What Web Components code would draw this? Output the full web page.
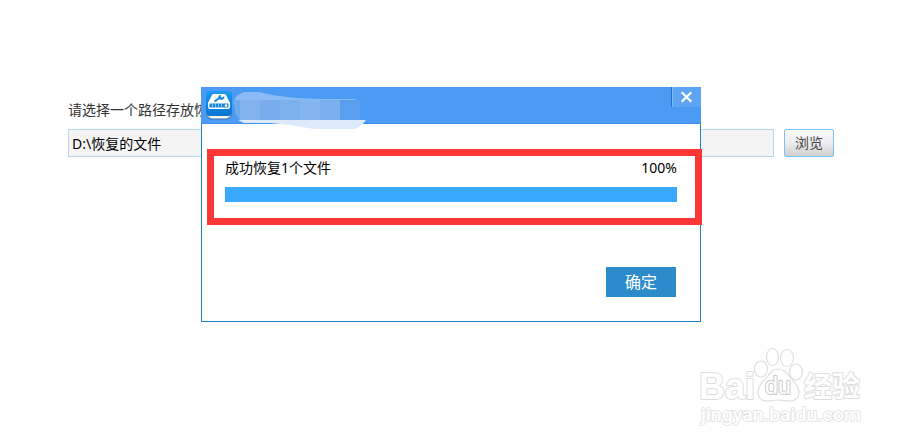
<!DOCTYPE html>
<html lang="zh-CN">
<head>
<meta charset="utf-8">
<title>恢复文件</title>
<style>
  body {
    margin: 0;
    width: 912px;
    height: 446px;
    overflow: hidden;
    background: #fff;
    font: 14px/20px "Noto Sans", "Noto Sans CJK SC", sans-serif;
    color: #000;
  }
</style>
</head>
<body>
<recovery-page>
  <path-picker label="请选择一个路径存放恢" button="浏览">D:\恢复的文件</path-picker>
  <progress-dialog slot="dialog">
    <app-icon slot="icon"></app-icon>
    <progress-row value="100">成功恢复1个文件</progress-row>
    <primary-button slot="actions">确定</primary-button>
  </progress-dialog>
  <site-watermark slot="mark"></site-watermark>
</recovery-page>

<script>
class BaseElement extends HTMLElement {
  constructor() {
    super();
    this.root = this.attachShadow({mode: 'open'});
  }

  connectedCallback() {
    this.root.innerHTML = `<style>${this.styles()}</style>${this.template()}`;
  }

  styles() { return ''; }
  template() { return '<slot></slot>'; }
}

class RecoveryPage extends BaseElement {
  styles() {
    return `
      :host { display: block; position: relative; box-sizing: border-box;
              width: 912px; height: 446px; padding: 100px 78px 0 68px; }
      ::slotted([slot=dialog]) { position: absolute; left: 201px; top: 87px; }
      ::slotted([slot=mark]) { position: absolute; left: 690px; top: 340px; }
    `;
  }

  template() {
    return `<slot></slot><slot name="dialog"></slot><slot name="mark"></slot>`;
  }
}

class PathPicker extends BaseElement {
  styles() {
    return `
      :host { display: flex; flex-direction: column; gap: 9px; }
      .label { color: #333; white-space: nowrap; }
      .row { display: flex; gap: 10px; }
      .field { flex: 1; box-sizing: border-box; height: 28px; padding: 4px 3px 0;
               line-height: 20px; background: #f4f4f4; border: 1px solid #b5d8e8; }
      button { box-sizing: border-box; width: 50px; height: 28px; padding: 0;
               font: inherit; line-height: 26px; color: #444;
               border: 1px solid #79c3f7; border-radius: 2px;
               background: linear-gradient(#fbfbfb, #ececec 50%, #d0d0d0); }
    `;
  }

  template() {
    return `
      <div class="label">${this.getAttribute('label')}</div>
      <div class="row">
        <div class="field"><slot></slot></div>
        <button>${this.getAttribute('button')}</button>
      </div>
    `;
  }
}

class AppIcon extends BaseElement {
  styles() {
    return `:host { display: block; width: 28px; height: 30px; } svg { display: block; }`;
  }

  template() {
    return `
      <svg width="28" height="30" viewBox="0 0 28 30">
        <defs>
          <linearGradient id="face" x1="0" y1="0" x2="0" y2="1">
            <stop offset="0" stop-color="#1d9af2"/>
            <stop offset=".6" stop-color="#0a84e0"/>
            <stop offset="1" stop-color="#0a76d0"/>
          </linearGradient>
          <linearGradient id="rim" x1="0" y1="0" x2="1" y2="0">
            <stop offset="0" stop-color="#9a948e"/>
            <stop offset=".2" stop-color="#f4f2ef"/>
            <stop offset=".8" stop-color="#f4f2ef"/>
            <stop offset="1" stop-color="#958f89"/>
          </linearGradient>
        </defs>
        <rect x="1" y="6" width="26" height="22.500" rx="6" fill="#3570b8"/>
        <rect x="1" y="5" width="26" height="22.500" rx="6" fill="url(#rim)"/>
        <rect x="1" y="0" width="26" height="25" rx="4" fill="url(#face)"/>
        <path d="M8.500 3h11q1 0 1.500 1l4 8H3l4-8q.5-1 1.500-1z" fill="#fff"/>
        <path d="M9.500 10.500l5.500-4" stroke="#1487e0" stroke-width="2"/>
        <path d="M13.500 4.500l2.500-.5-.3 2 1.600.5 2-1.500v2.600l-2.500 1.400-3.300-1z" fill="#1487e0"/>
        <path d="M3 11h22v5q0 2-2 2H5q-2 0-2-2z" fill="#fff"/>
        <rect x="4.500" y="12.500" width="19" height="4" rx=".5" fill="#1683dc"/>
        <path d="M7.500 12.500v4m3-4v4m3-4v4m3-4v4" stroke="#a9d5f8" stroke-width=".8"/>
        <circle cx="21" cy="14.500" r="1.300" fill="#fff"/>
      </svg>
    `;
  }
}

class ProgressDialog extends BaseElement {
  styles() {
    return `
      :host { display: flex; flex-direction: column; box-sizing: border-box;
              width: 500px; height: 235px; background: #fff;
              border: 1px solid #2380c0; border-top: 0; }
      header { display: flex; justify-content: space-between; box-sizing: border-box;
               height: 37px; margin: 0 -1px; padding-left: 4px;
               background: #4b9af4; border-bottom: 1px solid #3f91ed; }
      .icon { padding-top: 4px; }
      .smudge { position: absolute; left: 32px; top: 3px; }
      .close { display: flex; align-items: center; justify-content: center;
               box-sizing: border-box; width: 30px; height: 20px;
               background: #5da4f5; border-left: 1px solid #2c70bc;
               box-shadow: inset 1px 0 #81b9f8; }
      .body { padding: 34px 23px 0; }
      footer { display: flex; justify-content: flex-end; padding: 65px 24px 0 0; }
      /* marco rojo que resalta el progreso */
      .mark { position: absolute; left: 5px; top: 62px; box-sizing: border-box;
              width: 495px; height: 76px; border: 7px solid #fd3636; }
    `;
  }

  template() {
    return `
      <header>
        <div class="icon"><slot name="icon"></slot></div>
        <div class="close">
          <svg width="13" height="12" viewBox="0 0 13 12">
            <path d="M1.700 1.200l9.600 9.600m0-9.600l-9.600 9.600" stroke="#fff" stroke-width="2.200"/>
          </svg>
        </div>
      </header>
      <svg class="smudge" width="136" height="42" viewBox="0 0 136 42">
        <path d="M1 8l3-3 6-3h15l14 3 14 2 10 1 20 1 38 0 5 2v19H6L2 24l-1-6-1-5z" fill="#8abaf5"/>
        <path d="M1 10h5v20L3 25l-2-7z" fill="#6ea9ef"/>
        <path d="M6 10h20v20H6z" fill="#82b3ef"/>
        <path d="M26 10h20v20H26z" fill="#79acec"/>
        <path d="M46 10h20v20H46z" fill="#7db1ed"/>
        <path d="M66 10h20v20H66z" fill="#83b5f0"/>
        <path d="M86 10h20v20H86z" fill="#7bafee"/>
        <path d="M106 10h19l1 2v18h-20z" fill="#5a9eef"/>
        <path d="M4 30h128l-5 6-6 3-41 0-24-4-20-2H10z" fill="#dceafb"/>
      </svg>
      <div class="body"><slot></slot></div>
      <footer><slot name="actions"></slot></footer>
      <div class="mark"></div>
    `;
  }
}

class ProgressRow extends BaseElement {
  styles() {
    return `
      :host { display: flex; flex-direction: column; gap: 9px; }
      .text { display: flex; justify-content: space-between; }
      .track { height: 15px; background: #e6e6e6; }
      .bar { height: 100%; background: #38a9fd; }
    `;
  }

  template() {
    const value = this.getAttribute('value');
    return `
      <div class="text"><span><slot></slot></span><span>${value}%</span></div>
      <div class="track"><div class="bar" style="width: ${value}%"></div></div>
    `;
  }
}

class PrimaryButton extends BaseElement {
  styles() {
    return `
      :host { display: block; }
      button { display: block; width: 70px; height: 30px; padding: 0; border: 0;
               font: inherit; font-size: 16px; line-height: 29px;
               color: #fff; background: #2d8bcb; }
    `;
  }

  template() {
    return `<button><slot></slot></button>`;
  }
}

class SiteWatermark extends BaseElement {
  styles() {
    return `
      :host { display: block; width: 180px; height: 95px; }
      svg { display: block; }
      .line { fill: #fff; stroke: #dedede; stroke-width: 1.200; }
      text { fill: #fff; stroke: #dedede; stroke-width: 2; paint-order: stroke;
             stroke-linejoin: round; }
      .logo { font: bold 37px "Liberation Sans", sans-serif; }
      .du { font: 23px "Liberation Sans", sans-serif; stroke: #cacaca; }
      .cn { font: bold 28px "Noto Sans CJK SC", sans-serif; }
      .url { font: 500 19px Roboto, sans-serif; stroke-width: 1.600; stroke: #e0e0e0; }
    `;
  }

  template() {
    return `
      <svg width="180" height="95" viewBox="0 0 180 95">
        <text class="logo" x="9" y="59" textLength="56" lengthAdjust="spacingAndGlyphs">Bai</text>
        <path class="line" d="M88 29c6 0 9 4 12 8s9 8 9 15c0 6-4 9-9 9-4 0-7-1-12-1s-7 1-11 1c-6 0-9-4-9-9 0-7 5-10 9-15 3-4 6-8 11-8z"/>
        <ellipse class="line" cx="71" cy="29" rx="6.500" ry="8"/>
        <ellipse class="line" cx="82.500" cy="17" rx="6" ry="8.500"/>
        <ellipse class="line" cx="97" cy="18" rx="6.500" ry="8.500"/>
        <ellipse class="line" cx="106" cy="32" rx="6.500" ry="8"/>
        <text class="du" x="75" y="54" textLength="26" lengthAdjust="spacingAndGlyphs">du</text>
        <text class="cn" x="114" y="57" textLength="56" lengthAdjust="spacingAndGlyphs">经验</text>
        <text class="url" x="11" y="81" textLength="160" lengthAdjust="spacingAndGlyphs">jingyan.baidu.com</text>
      </svg>
    `;
  }
}

customElements.define('recovery-page', RecoveryPage);
customElements.define('path-picker', PathPicker);
customElements.define('app-icon', AppIcon);
customElements.define('progress-dialog', ProgressDialog);
customElements.define('progress-row', ProgressRow);
customElements.define('primary-button', PrimaryButton);
customElements.define('site-watermark', SiteWatermark);
</script>
</body>
</html>
